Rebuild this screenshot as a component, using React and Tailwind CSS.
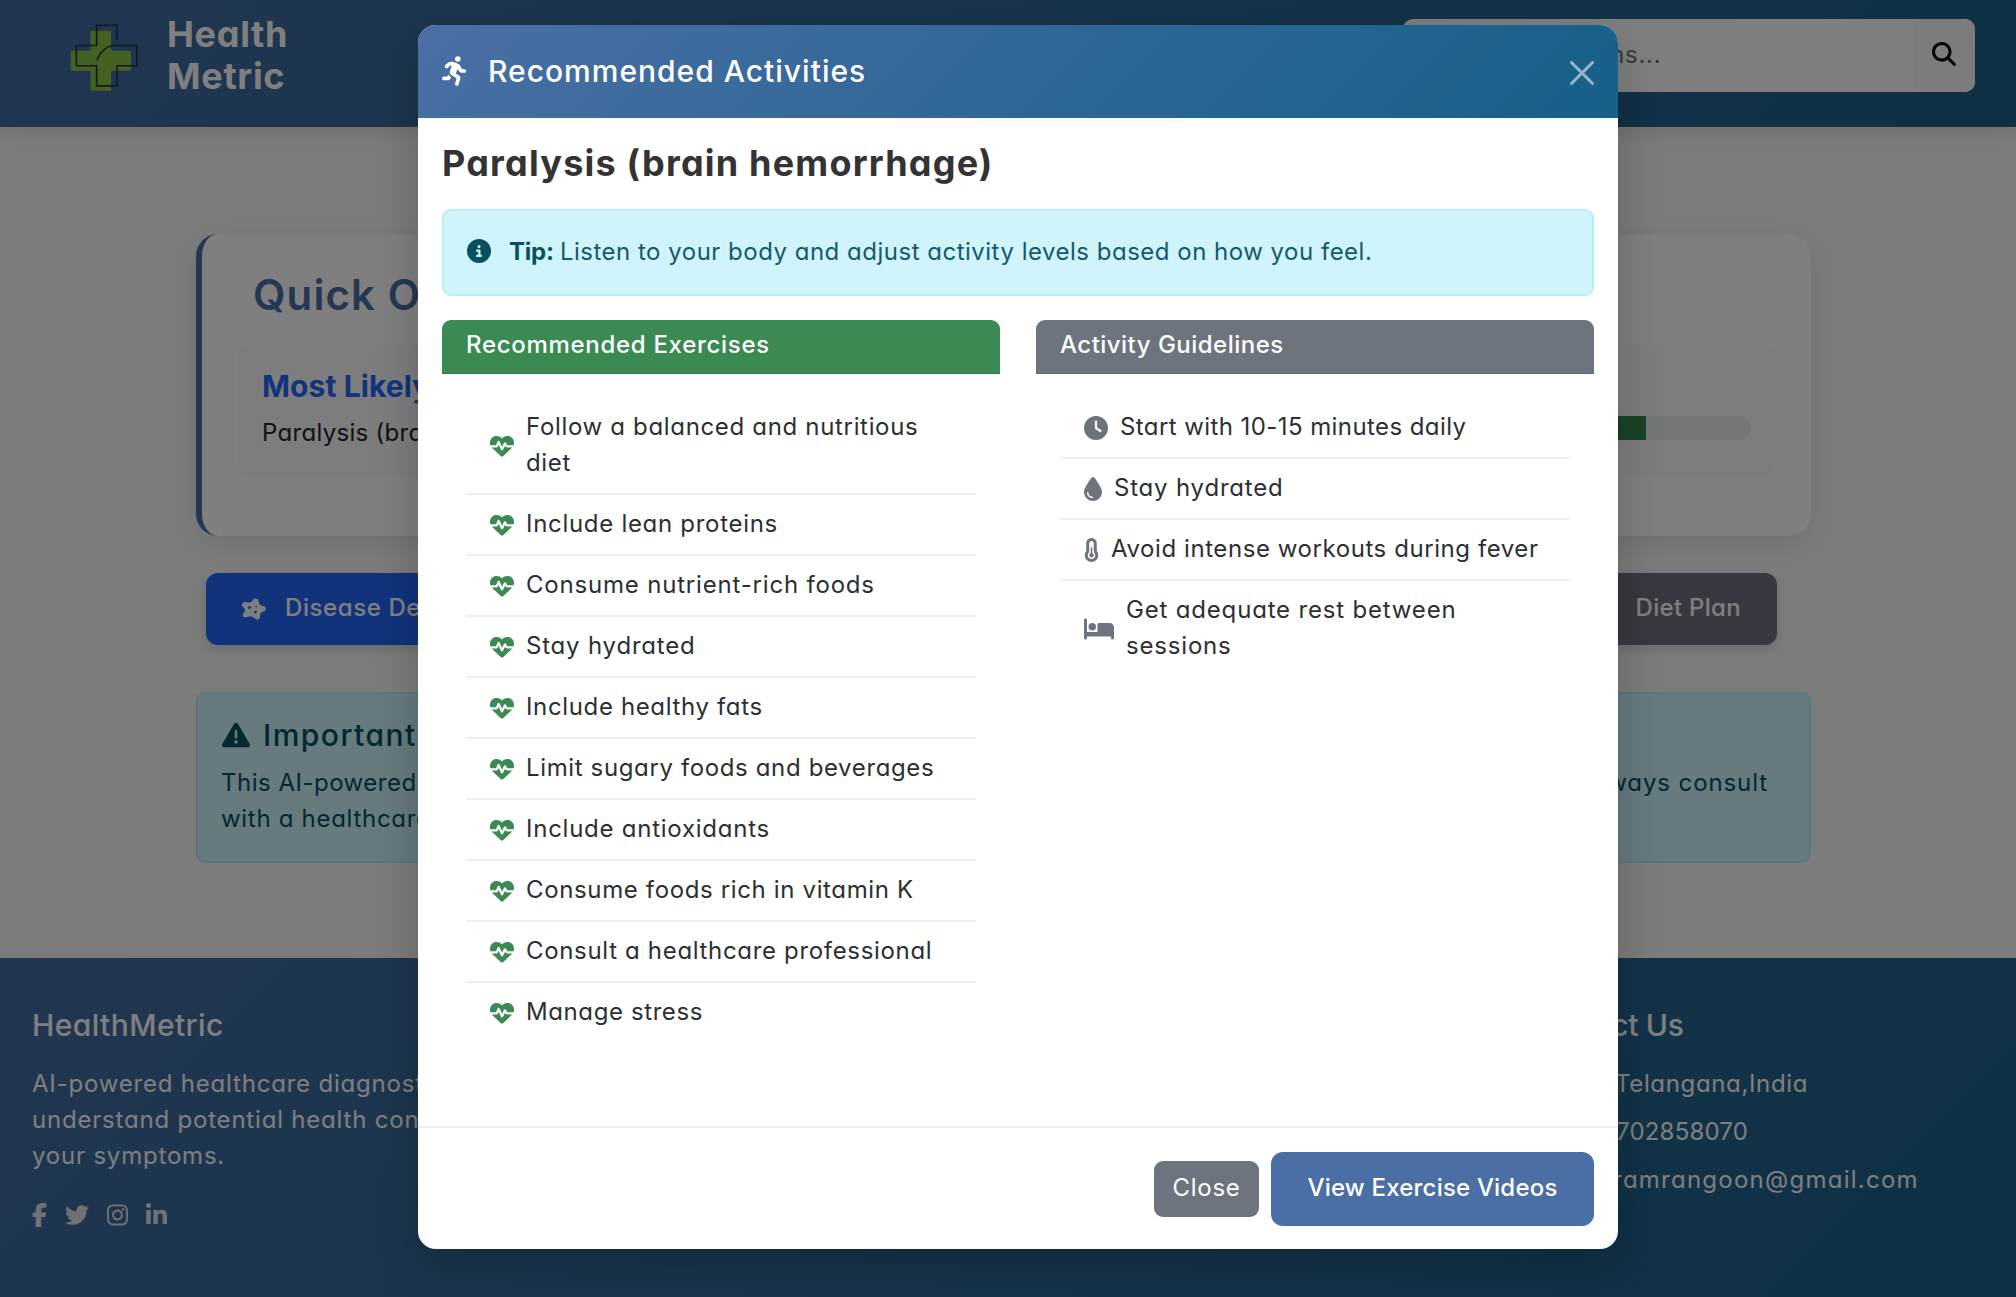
import React from "react";
import {
  FaBed,
  FaCircleInfo,
  FaClock,
  FaDisease,
  FaDroplet,
  FaEnvelope,
  FaFacebookF,
  FaHeartPulse,
  FaInstagram,
  FaLinkedinIn,
  FaLocationDot,
  FaMagnifyingGlass,
  FaPersonRunning,
  FaPhone,
  FaTemperatureHalf,
  FaTriangleExclamation,
  FaTwitter,
  FaUtensils,
} from "react-icons/fa6";

const exercises = [
  { lines: ["Follow a balanced and nutritious", "diet"], tracking: "tracking-[0.67px]" },
  { lines: ["Include lean proteins"], tracking: "tracking-[0.7px]" },
  { lines: ["Consume nutrient-rich foods"], tracking: "tracking-[0.81px]" },
  { lines: ["Stay hydrated"], tracking: "tracking-[0.8px]" },
  { lines: ["Include healthy fats"], tracking: "tracking-[0.64px]" },
  { lines: ["Limit sugary foods and beverages"], tracking: "tracking-[0.63px]" },
  { lines: ["Include antioxidants"], tracking: "tracking-[0.75px]" },
  { lines: ["Consume foods rich in vitamin K"], tracking: "tracking-[0.64px]" },
  { lines: ["Consult a healthcare professional"], tracking: "tracking-[0.67px]" },
  { lines: ["Manage stress"], tracking: "tracking-[0.6px]" },
];

const guidelines = [
  { Icon: FaClock, size: "w-6", lines: ["Start with 10-15 minutes daily"], tracking: "tracking-[0.42px]" },
  { Icon: FaDroplet, size: "w-[18px]", lines: ["Stay hydrated"], tracking: "tracking-[0.8px]" },
  { Icon: FaTemperatureHalf, size: "w-[15px]", lines: ["Avoid intense workouts during fever"], tracking: "tracking-[0.57px]" },
  { Icon: FaBed, size: "w-[30px]", lines: ["Get adequate rest between", "sessions"], tracking: "tracking-[0.82px]" },
];

function Logo() {
  return (
    <svg className="h-[68px] w-[68px] shrink-0" viewBox="70 24 68 68" fill="none">
      <path
        d="M92 30.7h17.5q1.5 0 1.5 1.5v17q0 1.5 1.5 1.5h17q1.5 0 1.5 1.5v17q0 1.5-1.5 1.5h-17q-1.5 0-1.5 1.5v17q0 1.5-1.5 1.5H92q-1.5 0-1.5-1.5v-17q0-1.5-1.5-1.5H72.2q-1.5 0-1.5-1.5v-17q0-1.5 1.5-1.5H89q1.5 0 1.5-1.5v-17q0-1.5 1.5-1.5z"
        fill="#8ac244"
      />
      <path
        d="M117 40V25.3H96.6v20.2H76.4v20.2h20.2v20.2H117V65.7h19.8V45.5H113.5Q102 47 97.2 59.8"
        stroke="#22303f"
        strokeWidth="1.6"
        strokeLinecap="round"
      />
    </svg>
  );
}

function ListRow({ Icon, size, color, lines, tracking, last }) {
  return (
    <li className={last ? "flex items-center px-6 pt-[11px] pb-[10px]" : "flex items-center border-b-2 border-[#eeeff0] px-6 pt-[11px] pb-[10px]"}>
      <Icon className={`h-6 shrink-0 ${size} ${color}`} />
      <div className={`ml-3 pb-[2px] whitespace-nowrap ${tracking}`}>
        {lines.map((line) => (
          <div key={line}>{line}</div>
        ))}
      </div>
    </li>
  );
}

function Header() {
  return (
    <header className="flex h-[127px] items-start bg-[linear-gradient(135deg,#446da3,#1a618a)] pl-[70px] shadow-[0_4px_20px_rgba(0,0,0,0.12)]">
      <div className="pt-6">
        <Logo />
      </div>
      <div className="mt-[13px] ml-[29px] text-[36px] leading-[42px] font-bold tracking-[0.7px] text-white">
        <div>Health</div>
        <div>Metric</div>
      </div>
      <div className="mt-[19px] mr-[41px] ml-auto flex h-[73px] w-[572px] overflow-hidden rounded-[10px] bg-white">
        <div className="flex-1 pt-[18px] pl-[20px] tracking-[0.7px] whitespace-nowrap text-[#6c757d]">Search symptoms...</div>
        <div className="flex w-[62px] items-center justify-center bg-[#f8f9fa] pb-[3px] text-black">
          <FaMagnifyingGlass className="h-6 w-6" />
        </div>
      </div>
    </header>
  );
}

function Main() {
  return (
    <main className="h-[831px] pt-[107px] pr-[205px] pl-[196px]">
      <section className="h-[302px] rounded-[22px] border-l-[6px] border-[#4a6fa5] bg-white pr-[36px] pl-[36px] shadow-[0_8px_30px_rgba(0,0,0,0.1)]">
        <h3 className="pt-[36px] pl-[15px] text-[42px] leading-[50px] font-semibold tracking-[1.1px] text-[#4a6fa5]">Quick Overview</h3>
        <div className="mt-[25px] flex h-[131px] justify-between rounded-xl bg-[#fafafa] px-6 pt-[23px]">
          <div>
            <div className="text-[30px] leading-[36px] font-bold tracking-[0.1px] text-[#2268fb]">Most Likely Condition</div>
            <div className="mt-[11px] tracking-[0.3px] text-[#212529]">Paralysis (brain hemorrhage)</div>
          </div>
          <div className="mt-[48px] h-6 w-[700px] overflow-hidden rounded-full bg-[#e9ecef]">
            <div className="h-full w-[595px] bg-[#35864f]" />
          </div>
        </div>
      </section>

      <div className="mt-[37px] flex h-[72px] justify-between pr-[34px] pl-[10px] font-medium text-white">
        <div className="flex w-[340px] items-center rounded-xl bg-[#2067f8] pl-9 shadow-[0_4px_12px_rgba(0,0,0,0.15)]">
          <FaDisease className="mb-px h-6 w-6" />
          <span className="ml-[19px] pb-[2px] tracking-[0.6px]">Disease Details</span>
        </div>
        <div className="flex w-[250px] items-center justify-end rounded-xl bg-[#6c727e] pr-9 shadow-[0_4px_12px_rgba(0,0,0,0.15)]">
          <FaUtensils className="h-6 w-[21px]" />
          <span className="ml-[18px] pb-[2px] tracking-[0.3px]">Diet Plan</span>
        </div>
      </div>

      <section className="mt-[47px] h-[171px] rounded-[9px] border-2 border-[#b6effb] bg-[#cff4fc] pr-[41px] pl-[23px] text-[#055160]">
        <div className="flex items-center pt-[23px] text-[30px] leading-[36px] font-medium">
          <FaTriangleExclamation className="h-[28px] w-[30px]" />
          <span className="ml-[12px] tracking-[1.5px]">Important Notice</span>
        </div>
        <div className="mt-[12px] flex justify-between whitespace-nowrap">
          <span className="tracking-[0.5px]">This AI-powered tool provides general information only.</span>
          <span className="tracking-[0.9px]">Always consult</span>
        </div>
        <div className="tracking-[0.7px]">with a healthcare professional for medical advice.</div>
      </section>
    </main>
  );
}

function Footer() {
  return (
    <footer className="flex h-[380px] justify-between bg-[linear-gradient(135deg,#446da3,#1a618a)] pt-[49px] pl-[32px] text-white">
      <div>
        <h5 className="text-[30px] leading-[36px] font-medium tracking-[0.4px]">HealthMetric</h5>
        <div className="mt-[23px] tracking-[0.8px] whitespace-nowrap">
          <div>AI-powered healthcare diagnostics to</div>
          <div>understand potential health conditions from</div>
          <div>your symptoms.</div>
        </div>
        <div className="mt-[29px] flex gap-[18px] text-[#e3e5ea]">
          <FaFacebookF className="h-6 w-[15px]" />
          <FaTwitter className="h-6 w-6" />
          <FaInstagram className="h-6 w-[21px]" />
          <FaLinkedinIn className="h-6 w-[21px]" />
        </div>
      </div>
      <div className="w-[481px]">
        <h5 className="-ml-[9px] text-[30px] leading-[36px] font-medium tracking-[-0.3px]">Contact Us</h5>
        <div className="mt-[23px] grid gap-3">
          <div className="flex items-center">
            <FaLocationDot className="mr-[56px] h-6 w-[24px]" />
            <span className="tracking-[0.65px]">Telangana,India</span>
          </div>
          <div className="flex items-center">
            <FaPhone className="mr-[57px] h-6 w-6" />
            <span className="tracking-[0.2px]">702858070</span>
          </div>
          <div className="flex items-center">
            <FaEnvelope className="mr-[54px] h-6 w-6" />
            <span className="tracking-[1.25px]">ramrangoon@gmail.com</span>
          </div>
        </div>
      </div>
    </footer>
  );
}

function Modal() {
  return (
    <div className="flex h-[1224px] w-[1200px] flex-col overflow-hidden rounded-[18px] bg-white text-[#2b2f33] shadow-[0_15px_45px_rgba(0,0,0,0.2)]">
      <div className="flex h-[93px] shrink-0 items-center bg-[linear-gradient(135deg,#4a6fa5,#166088)] pr-6 pl-6 pb-[2px] text-white">
        <FaPersonRunning className="h-[30px] w-[26px]" />
        <h5 className="ml-[20px] pt-px text-[30px] leading-[45px] font-medium tracking-[1px]">Recommended Activities</h5>
        <svg className="mt-[4px] ml-auto h-6 w-6 opacity-55" viewBox="0 0 16 16" fill="currentColor">
          <path d="M.293.293a1 1 0 0 1 1.414 0L8 6.586 14.293.293a1 1 0 1 1 1.414 1.414L9.414 8l6.293 6.293a1 1 0 0 1-1.414 1.414L8 9.414l-6.293 6.293a1 1 0 0 1-1.414-1.414L6.586 8 .293 1.707a1 1 0 0 1 0-1.414z" />
        </svg>
      </div>

      <div className="flex-1 px-6 pt-[24px]">
        <h4 className="text-[36px] leading-[43px] font-bold tracking-[1.2px] text-[#333333]">Paralysis (brain hemorrhage)</h4>
        <div className="mt-[24px] flex h-[87px] items-center rounded-[9px] border-2 border-[#b6effb] bg-[#cff4fc] pb-[3px] pl-[23px] text-[#15596a]">
          <FaCircleInfo className="h-6 w-6 text-[#0b5060]" />
          <span className="ml-[18px] pt-px font-bold tracking-[-0.2px] text-[#0b5060]">Tip:</span>
          <span className="ml-[6px] pt-px tracking-[0.5px]">Listen to your body and adjust activity levels based on how you feel.</span>
        </div>

        <div className="mt-[24px] grid grid-cols-2 gap-9">
          <section>
            <div className="h-[54px] rounded-t-[9px] border-b border-[#317a48] bg-[#3b8953] pt-[7px] pl-6 font-medium tracking-[0.7px] text-white">
              Recommended Exercises
            </div>
            <ul className="px-6 pt-6">
              {exercises.map((item, i) => (
                <ListRow key={item.lines[0]} Icon={FaHeartPulse} size="w-6" color="text-[#3b8953]" last={i === exercises.length - 1} {...item} />
              ))}
            </ul>
          </section>
          <section>
            <div className="h-[54px] rounded-t-[9px] border-b border-[#62686f] bg-[#6d747d] pt-[7px] pl-6 font-medium tracking-[0.48px] text-white">
              Activity Guidelines
            </div>
            <ul className="px-6 pt-6">
              {guidelines.map((item, i) => (
                <ListRow key={item.lines[0]} color="text-[#6d747d]" last={i === guidelines.length - 1} {...item} />
              ))}
            </ul>
          </section>
        </div>
      </div>

      <div className="flex h-[123px] shrink-0 items-center justify-end gap-3 border-t-2 border-[#eeeff0] px-6">
        <div className="flex h-[56px] w-[105px] items-center justify-center rounded-[9px] bg-[#6d747d] pb-[2px] tracking-[0.7px] text-white">Close</div>
        <div className="flex h-[74px] w-[323px] items-center justify-center rounded-xl bg-[#4a6fa5] pb-[2px] font-medium tracking-[0.2px] text-white">
          View Exercise Videos
        </div>
      </div>
    </div>
  );
}

export default function App() {
  return (
    <div className="relative h-[1297px] w-[2016px] overflow-hidden bg-[#f8f9fa] font-['Inter',sans-serif] text-[24px] leading-[36px] [font-feature-settings:'cv11']">
      <Header />
      <Main />
      <Footer />
      <div className="absolute inset-0 flex items-start bg-black/50 pt-[25px] pl-[418px]">
        <Modal />
      </div>
    </div>
  );
}
